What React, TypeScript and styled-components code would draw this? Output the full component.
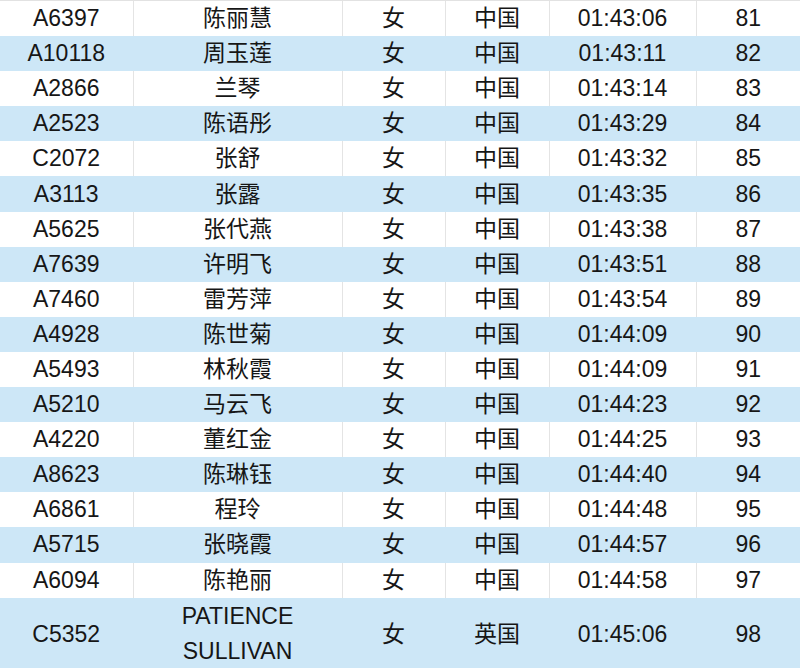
import React from 'react';
import styled, { createGlobalStyle } from 'styled-components';

const GlobalStyle = createGlobalStyle`
  html, body {
    margin: 0;
    padding: 0;
    background: #ffffff;
  }
  body {
    font-family: "Liberation Sans", "Noto Sans CJK SC", sans-serif;
  }
`;

const Sheet = styled.div`
  width: 800px;
  height: 668px;
  overflow: hidden;
  border-top: 1px solid #e2e2e2;
  box-sizing: border-box;
`;

const Table = styled.table`
  width: 800px;
  border-collapse: collapse;
  table-layout: fixed;
`;

const Row = styled.tr<{ $shaded: boolean; $tall?: boolean }>`
  height: ${(p) => (p.$tall ? '73px' : '35.1px')};
  background-color: ${(p) => (p.$shaded ? '#cde7f7' : '#ffffff')};

  td {
    border-right: 1.5px solid ${(p) => (p.$shaded ? 'transparent' : '#e4e4e4')};
  }
`;

const Cell = styled.td`
  padding: 0;
  text-align: center;
  vertical-align: middle;
  font-size: 23px;
  line-height: 35px;
  color: #161616;
  font-family: "Liberation Sans", "Noto Sans CJK SC", sans-serif;
  white-space: nowrap;

  &:last-child {
    border-right: none;
  }
`;

const NameCell = styled(Cell)`
  white-space: normal;
`;

interface Runner {
  id: string;
  name: string;
  gender: string;
  country: string;
  time: string;
  rank: number;
}

const runners: Runner[] = [
  { id: 'A6397', name: '陈丽慧', gender: '女', country: '中国', time: '01:43:06', rank: 81 },
  { id: 'A10118', name: '周玉莲', gender: '女', country: '中国', time: '01:43:11', rank: 82 },
  { id: 'A2866', name: '兰琴', gender: '女', country: '中国', time: '01:43:14', rank: 83 },
  { id: 'A2523', name: '陈语彤', gender: '女', country: '中国', time: '01:43:29', rank: 84 },
  { id: 'C2072', name: '张舒', gender: '女', country: '中国', time: '01:43:32', rank: 85 },
  { id: 'A3113', name: '张露', gender: '女', country: '中国', time: '01:43:35', rank: 86 },
  { id: 'A5625', name: '张代燕', gender: '女', country: '中国', time: '01:43:38', rank: 87 },
  { id: 'A7639', name: '许明飞', gender: '女', country: '中国', time: '01:43:51', rank: 88 },
  { id: 'A7460', name: '雷芳萍', gender: '女', country: '中国', time: '01:43:54', rank: 89 },
  { id: 'A4928', name: '陈世菊', gender: '女', country: '中国', time: '01:44:09', rank: 90 },
  { id: 'A5493', name: '林秋霞', gender: '女', country: '中国', time: '01:44:09', rank: 91 },
  { id: 'A5210', name: '马云飞', gender: '女', country: '中国', time: '01:44:23', rank: 92 },
  { id: 'A4220', name: '董红金', gender: '女', country: '中国', time: '01:44:25', rank: 93 },
  { id: 'A8623', name: '陈琳钰', gender: '女', country: '中国', time: '01:44:40', rank: 94 },
  { id: 'A6861', name: '程玲', gender: '女', country: '中国', time: '01:44:48', rank: 95 },
  { id: 'A5715', name: '张晓霞', gender: '女', country: '中国', time: '01:44:57', rank: 96 },
  { id: 'A6094', name: '陈艳丽', gender: '女', country: '中国', time: '01:44:58', rank: 97 },
  { id: 'C5352', name: 'PATIENCE SULLIVAN', gender: '女', country: '英国', time: '01:45:06', rank: 98 },
];

const columnWidths = [133, 209, 103, 104, 147, 104];

export default function App() {
  return (
    <>
      <GlobalStyle />
      <Sheet>
        <Table>
          <colgroup>
            {columnWidths.map((w, i) => (
              <col key={i} style={{ width: w }} />
            ))}
          </colgroup>
          <tbody>
            {runners.map((r, i) => (
              <Row key={r.id} $shaded={i % 2 === 1} $tall={r.name.length > 10}>
                <Cell>{r.id}</Cell>
                <NameCell>
                  {r.name.length > 10 ? (
                    <>
                      PATIENCE
                      <br />
                      SULLIVAN
                    </>
                  ) : (
                    r.name
                  )}
                </NameCell>
                <Cell>{r.gender}</Cell>
                <Cell>{r.country}</Cell>
                <Cell>{r.time}</Cell>
                <Cell>{r.rank}</Cell>
              </Row>
            ))}
          </tbody>
        </Table>
      </Sheet>
    </>
  );
}
